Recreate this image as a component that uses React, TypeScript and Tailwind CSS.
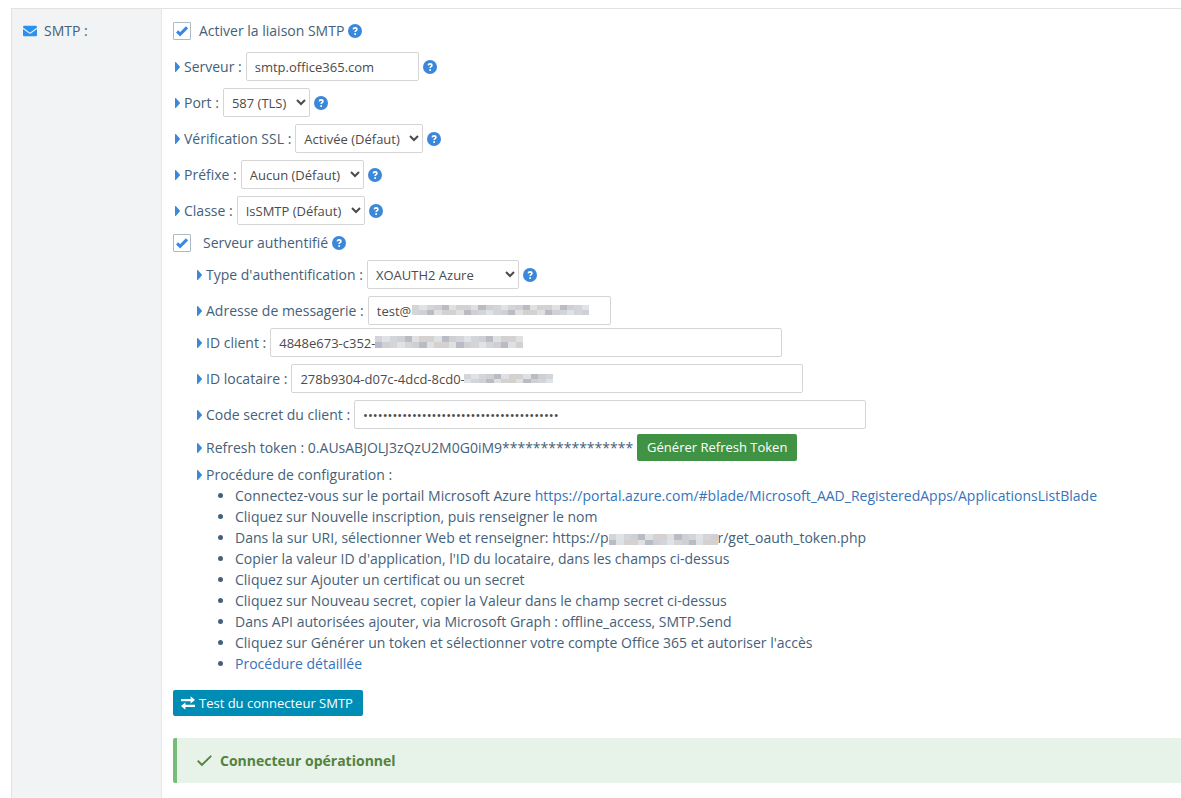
import { useState } from 'react';
import type { ReactNode } from 'react';

const inputClass =
  'h-[29px] rounded-[2px] border border-[#d5d5d5] bg-white px-2 text-[13px] text-[#4b4b4b] focus:border-[#3b87d9] focus:outline-none';
const selectClass =
  'h-[29px] rounded-[2px] border border-[#d5d5d5] bg-white pr-1.5 pl-1 text-[13px] text-[#4b4b4b] focus:border-[#3b87d9] focus:outline-none';

const Caret = () => (
  <svg className="mr-1 h-[10px] w-[5px] shrink-0" viewBox="0 0 5 10" fill="#3b87d9" aria-hidden="true">
    <path d="M0 .6C0 .1.6-.1 1 .3l3.8 4.2a.7.7 0 0 1 0 1L1 9.7c-.4.4-1 .2-1-.3z" />
  </svg>
);

const Help = () => (
  <svg className="ml-1 h-[14px] w-[14px] shrink-0" viewBox="0 0 14 14" role="img" aria-label="Aide">
    <circle cx="7" cy="7" r="7" fill="#3b87d9" />
    <path d="M5.2 5.3C5.400 4.300 6.100 3.900 7 3.900c1.100 0 1.900.6 1.900 1.500 0 1.300-1.800 1.300-1.800 2.700" fill="none" stroke="#fff" strokeWidth="1.600" />
    <circle cx="7.100" cy="10" r="1" fill="#fff" />
  </svg>
);

type RowProps = { label: string; id: string; help?: boolean; tight?: boolean; children: ReactNode };

const Row = ({ label, id, help, tight, children }: RowProps) => (
  <div className={`flex min-h-[29px] items-center ${tight ? 'mt-[3px]' : 'mt-[7px]'}`}>
    <Caret />
    <label htmlFor={id} className="mr-1 whitespace-nowrap">
      {label} :
    </label>
    {children}
    {help && <Help />}
  </div>
);

type CheckProps = { id: string; label: string; gap: string; checked: boolean; onChange: (v: boolean) => void };

const Check = ({ id, label, gap, checked, onChange }: CheckProps) => (
  <div className="flex h-[29px] items-center">
    <span className="relative h-[18px] w-[18px]">
      <input
        id={id}
        type="checkbox"
        checked={checked}
        onChange={(e) => onChange(e.target.checked)}
        className="block h-[18px] w-[18px] appearance-none rounded-[1px] border border-[#abbac3] bg-white"
      />
      {checked && (
        <svg className="pointer-events-none absolute top-[3px] left-[3px] h-3 w-3" viewBox="0 0 12 12" aria-hidden="true">
          <path d="M1.100 6.400l3 3L11 2.300" fill="none" stroke="#3b87e8" strokeWidth="3" />
        </svg>
      )}
    </span>
    <label htmlFor={id} className={gap}>
      {label}
    </label>
    <Help />
  </div>
);

// Pixelated strip that hides the private part of a value
const shades = ['#d3d5d9', '#dfe0e2', '#b9bcc5', '#e2e2e4', '#c8ced4', '#ececee', '#d6d1d1', '#cdd1d9', '#dde3e8', '#cfcfd4', '#e0dddc'];

const Mosaic = ({ cols, className }: { cols: number; className: string }) => (
  <svg className={className} viewBox={`0 0 ${cols} 2`} preserveAspectRatio="none" shapeRendering="crispEdges" aria-hidden="true">
    {Array.from({ length: cols * 2 }, (_, i) => (
      <rect key={i} x={i % cols} y={Math.floor(i / cols)} width="1" height="1" fill={shades[(i * i * 3 + i * 5) % shades.length]} />
    ))}
  </svg>
);

const App = () => {
  const [enabled, setEnabled] = useState(true);
  const [auth, setAuth] = useState(true);

  return (
    <div className="min-h-screen bg-white pt-2 pl-[11px] font-['Open_Sans',sans-serif] text-[14px] leading-[21px] text-[#456179]">
      <div className="flex min-h-[calc(100vh-8px)] border-t border-l border-[#e2e2e2]">
        <div className="w-[150px] shrink-0 border-r border-[#e6e6e6] bg-[#f1f3f5] pt-[11px] pl-[11px]">
          <div className="flex items-center">
            <svg className="mr-[7px] h-[14px] w-[14px]" viewBox="0 0 14 14" fill="#2a91ee" aria-hidden="true">
              <path d="M1.300 1.700h11.400c.7 0 1.300.6 1.300 1.300v.6L7.700 8.200c-.4.3-1 .3-1.400 0L0 3.600V3c0-.7.6-1.300 1.300-1.300z" />
              <path d="M0 5l5.500 4.100c.9.700 2.100.7 3 0L14 5v6c0 .7-.6 1.300-1.300 1.300H1.300C.6 12.300 0 11.700 0 11z" />
            </svg>
            SMTP :
          </div>
        </div>

        <div className="min-w-0 grow pt-[7px] pl-[11px]">
          <Check id="smtp" label="Activer la liaison SMTP" gap="ml-2" checked={enabled} onChange={setEnabled} />
          <div className="pl-0.5">
            <Row label="Serveur" id="server" help>
              <input id="server" type="text" defaultValue="smtp.office365.com" className={`${inputClass} w-[173px]`} />
            </Row>
            <Row label="Port" id="port" help>
              <select id="port" className={selectClass}>
                <option>587 (TLS)</option>
              </select>
            </Row>
            <Row label="Vérification SSL" id="ssl" help>
              <select id="ssl" className={selectClass}>
                <option>Activée (Défaut)</option>
              </select>
            </Row>
            <Row label="Préfixe" id="prefix" help>
              <select id="prefix" className={selectClass}>
                <option>Aucun (Défaut)</option>
              </select>
            </Row>
            <Row label="Classe" id="class" help>
              <select id="class" className={selectClass}>
                <option>IsSMTP (Défaut)</option>
              </select>
            </Row>
          </div>
          <div className="mt-[3px]">
            <Check id="auth" label="Serveur authentifié" gap="ml-3" checked={auth} onChange={setAuth} />
          </div>

          <div className="pl-6">
            <Row label="Type d'authentification" id="type" help tight>
              <select id="type" className={`${selectClass} w-[152px]`}>
                <option>XOAUTH2 Azure</option>
              </select>
            </Row>
            <Row label="Adresse de messagerie" id="mail">
              <span className="relative">
                <input id="mail" type="text" defaultValue="test@" className={`${inputClass} block w-[243px]`} />
                <Mosaic cols={24} className="absolute top-[9px] left-[44px] h-[10px] w-[177px]" />
              </span>
            </Row>
            <Row label="ID client" id="client" tight>
              <span className="relative">
                <input id="client" type="text" defaultValue="4848e673-c352-" className={`${inputClass} block w-[512px]`} />
                <Mosaic cols={20} className="absolute top-2 left-[105px] h-3 w-[148px]" />
              </span>
            </Row>
            <Row label="ID locataire" id="tenant">
              <span className="relative">
                <input id="tenant" type="text" defaultValue="278b9304-d07c-4dcd-8cd0-" className={`${inputClass} block w-[512px]`} />
                <Mosaic cols={12} className="absolute top-[10px] left-[173px] h-[9px] w-[89px]" />
              </span>
            </Row>
            <Row label="Code secret du client" id="secret">
              <input id="secret" type="password" defaultValue={'x'.repeat(40)} className={`${inputClass} w-[512px]`} />
            </Row>
            <div className="mt-[5px] flex items-center">
              <Caret />
              <span className="mr-1">Refresh token : 0.AUsABJOLJ3zQzU2M0G0iM9*****************</span>
              <button type="button" className="h-[27px] rounded-[2px] bg-[#409344] px-2.5 text-[13px] text-white hover:bg-[#37803b]">
                Générer Refresh Token
              </button>
            </div>
            <div className="mt-[3px] flex items-center">
              <Caret />
              Procédure de configuration :
            </div>
            <ul className="list-disc pl-[38px]">
              <li>
                Connectez-vous sur le portail Microsoft Azure{' '}
                <a href="#azure" className="text-[#3673b9] hover:underline">
                  https://portal.azure.com/#blade/Microsoft_AAD_RegisteredApps/ApplicationsListBlade
                </a>
              </li>
              <li>Cliquez sur Nouvelle inscription, puis renseigner le nom</li>
              <li>
                Dans la sur URI, sélectionner Web et renseigner: https://p
                <Mosaic cols={15} className="inline-block h-[11px] w-[109px]" />
                r/get_oauth_token.php
              </li>
              <li>Copier la valeur ID d'application, l'ID du locataire, dans les champs ci-dessus</li>
              <li>Cliquez sur Ajouter un certificat ou un secret</li>
              <li>Cliquez sur Nouveau secret, copier la Valeur dans le champ secret ci-dessus</li>
              <li>Dans API autorisées ajouter, via Microsoft Graph : offline_access, SMTP.Send</li>
              <li>Cliquez sur Générer un token et sélectionner votre compte Office 365 et autoriser l'accès</li>
              <li>
                <a href="#procedure" className="text-[#3673b9] hover:underline">
                  Procédure détaillée
                </a>
              </li>
            </ul>
          </div>

          <button
            type="button"
            className="mt-4 flex h-[26px] items-center rounded-[2px] bg-[#008db5] pr-2.5 pl-2 text-[13px] text-white hover:bg-[#007a9d]"
          >
            <svg className="mr-1 h-[14px] w-[14px]" viewBox="0 0 14 14" fill="currentColor" aria-hidden="true">
              <path d="M0 2.900h9.600V.3L14 4.100 9.600 7.500V5.200H0z" />
              <path d="M14 8.800H4.400V6.500L0 9.900l4.400 3.800v-2.600H14z" />
            </svg>
            Test du connecteur SMTP
          </button>

          <div className="mt-[22px] flex h-[45px] items-center rounded-l-[2px] border-l-4 border-[#76be78] bg-[#e7f3e8] pl-5 font-bold text-[#53823f]">
            <svg className="mr-2 h-[14px] w-[15px]" viewBox="0 0 15 14" aria-hidden="true">
              <path d="M.7 6.700l4.200 4.200L14.200 1.900" fill="none" stroke="currentColor" strokeWidth="1.900" />
            </svg>
            Connecteur opérationnel
          </div>
        </div>
      </div>
    </div>
  );
};

export default App;
